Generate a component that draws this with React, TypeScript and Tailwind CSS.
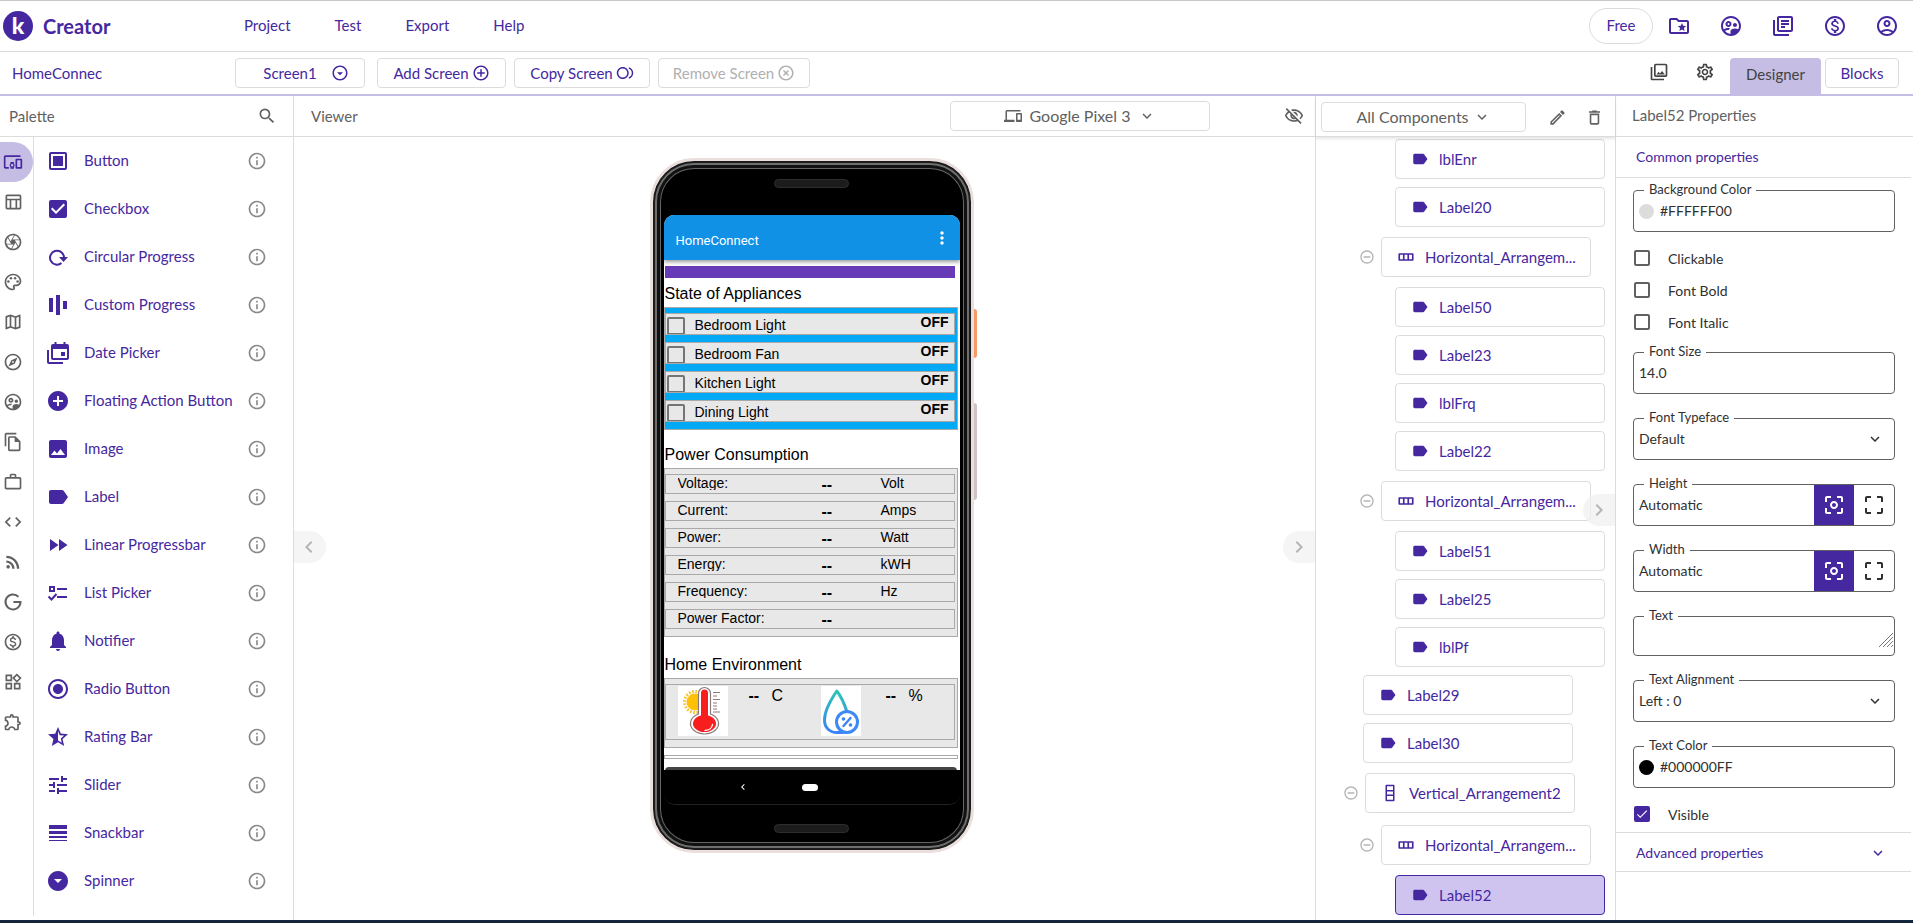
import { useState, type ReactNode } from 'react';
import type { IconType } from 'react-icons';
import {
  MdAddCircle,
  MdAddCircleOutline,
  MdArrowDropDownCircle,
  MdCenterFocusWeak,
  MdCheck,
  MdCheckBox,
  MdChevronLeft,
  MdChevronRight,
  MdCode,
  MdCropFree,
  MdDevices,
  MdFastForward,
  MdHighlightOff,
  MdImage,
  MdKeyboardArrowDown,
  MdLabel,
  MdMoreVert,
  MdNotifications,
  MdOutlineAccountCircle,
  MdOutlineArrowDropDownCircle,
  MdOutlineCamera,
  MdOutlineDelete,
  MdOutlineDevicesOther,
  MdOutlineEdit,
  MdOutlineExplore,
  MdOutlineExtension,
  MdOutlineFileCopy,
  MdOutlineFolderSpecial,
  MdOutlineInfo,
  MdOutlineLibraryBooks,
  MdOutlineMap,
  MdOutlineMonetizationOn,
  MdOutlinePalette,
  MdOutlinePhotoLibrary,
  MdOutlineSettings,
  MdOutlineSupervisedUserCircle,
  MdOutlineTableChart,
  MdOutlineVisibilityOff,
  MdOutlineWidgets,
  MdRadioButtonChecked,
  MdRemoveCircleOutline,
  MdRssFeed,
  MdSearch,
  MdStarHalf,
  MdToll,
  MdTune,
  MdWorkOutline,
} from 'react-icons/md';

type IconProps = { size?: number; className?: string };
type AnyIcon = IconType | ((p: IconProps) => ReactNode);

function Svg({ size = 24, className, children }: IconProps & { children: ReactNode }) {
  return (
    <svg width={size} height={size} viewBox="0 0 24 24" fill="currentColor" className={className}>
      {children}
    </svg>
  );
}

const ButtonIcon = (p: IconProps) => (
  <Svg {...p}>
    <rect x="4" y="4" width="16" height="16" rx="1" fill="none" stroke="currentColor" strokeWidth="2" />
    <rect x="7" y="7" width="10" height="10" />
  </Svg>
);

const CircularIcon = (p: IconProps) => (
  <Svg {...p}>
    <path d="M15.5 18.1A7 7 0 1 1 18 12" fill="none" stroke="currentColor" strokeWidth="2" />
    <path d="M13 12h9l-4.500 5z" />
  </Svg>
);

const BarsIcon = (p: IconProps) => (
  <Svg {...p}>
    <path d="M3 5h4v14H3zM10 2h4v20h-4zM17 8h4v8h-4z" />
  </Svg>
);

const DateIcon = (p: IconProps) => (
  <Svg {...p}>
    <path d="M7 3h1.500V1h2v2h7V1h2v2H21a2 2 0 0 1 2 2v12a2 2 0 0 1-2 2H7a2 2 0 0 1-2-2V5a2 2 0 0 1 2-2zm0 5v9h14V8zM15 11h4v4h-4z" />
    <path d="M1 9h2v12h14v2H3a2 2 0 0 1-2-2z" />
  </Svg>
);

const ListIcon = (p: IconProps) => (
  <Svg {...p}>
    <path d="M11 7h10v2H11zM11 15h10v2H11zM3 5h6v6H3zm2 2v2h2V7z" fillRule="evenodd" />
    <path d="M2.500 15.500l3 3 5-5.500" fill="none" stroke="currentColor" strokeWidth="2" />
  </Svg>
);

const SnackIcon = (p: IconProps) => (
  <Svg {...p}>
    <path d="M3 4h18v4H3zM3 10h18v3H3zM3 15h18v2H3zM3 19h18v1H3z" />
  </Svg>
);

const GoogleIcon = (p: IconProps) => (
  <Svg {...p}>
    <path d="M18.500 5.700A9 9 0 1 0 21 12h-8.500" fill="none" stroke="currentColor" strokeWidth="2.400" />
  </Svg>
);

const RowIcon = (p: IconProps) => (
  <Svg {...p}>
    <path d="M3 8h18v8H3zM9 8v8M15 8v8" fill="none" stroke="currentColor" strokeWidth="2.200" strokeLinejoin="round" />
  </Svg>
);

const ColumnIcon = (p: IconProps) => (
  <Svg {...p}>
    <path d="M7 2h10v20H7zM7 9h10M7 15h10" fill="none" stroke="currentColor" strokeWidth="2" strokeLinejoin="round" />
  </Svg>
);

const categories: { label: string; icon: AnyIcon }[] = [
  { label: 'User interface', icon: MdOutlineDevicesOther },
  { label: 'Layout', icon: MdOutlineTableChart },
  { label: 'Media', icon: MdOutlineCamera },
  { label: 'Drawing', icon: MdOutlinePalette },
  { label: 'Maps', icon: MdOutlineMap },
  { label: 'Sensors', icon: MdOutlineExplore },
  { label: 'Social', icon: MdOutlineSupervisedUserCircle },
  { label: 'Storage', icon: MdOutlineFileCopy },
  { label: 'Utilities', icon: MdWorkOutline },
  { label: 'Dynamic components', icon: MdCode },
  { label: 'Connectivity', icon: MdRssFeed },
  { label: 'Google', icon: GoogleIcon },
  { label: 'Monetization', icon: MdOutlineMonetizationOn },
  { label: 'Experimental', icon: MdOutlineWidgets },
  { label: 'Extension', icon: MdOutlineExtension },
];

const paletteItems: { label: string; icon: AnyIcon }[] = [
  { label: 'Button', icon: ButtonIcon },
  { label: 'Checkbox', icon: MdCheckBox },
  { label: 'Circular Progress', icon: CircularIcon },
  { label: 'Custom Progress', icon: BarsIcon },
  { label: 'Date Picker', icon: DateIcon },
  { label: 'Floating Action Button', icon: MdAddCircle },
  { label: 'Image', icon: MdImage },
  { label: 'Label', icon: MdLabel },
  { label: 'Linear Progressbar', icon: MdFastForward },
  { label: 'List Picker', icon: ListIcon },
  { label: 'Notifier', icon: MdNotifications },
  { label: 'Radio Button', icon: MdRadioButtonChecked },
  { label: 'Rating Bar', icon: MdStarHalf },
  { label: 'Slider', icon: MdTune },
  { label: 'Snackbar', icon: SnackIcon },
  { label: 'Spinner', icon: MdArrowDropDownCircle },
];

type Node = { name: string; kind: 'label' | 'row' | 'column'; indent: string };

const DEEP = 'pl-[79px]';
const SHALLOW = 'pl-[47px]';
const ROW = 'pl-[43px]';
const COLUMN = 'pl-[27px]';

const tree: Node[] = [
  { name: 'lblEnr', kind: 'label', indent: DEEP },
  { name: 'Label20', kind: 'label', indent: DEEP },
  { name: 'Horizontal_Arrangem...', kind: 'row', indent: ROW },
  { name: 'Label50', kind: 'label', indent: DEEP },
  { name: 'Label23', kind: 'label', indent: DEEP },
  { name: 'lblFrq', kind: 'label', indent: DEEP },
  { name: 'Label22', kind: 'label', indent: DEEP },
  { name: 'Horizontal_Arrangem...', kind: 'row', indent: ROW },
  { name: 'Label51', kind: 'label', indent: DEEP },
  { name: 'Label25', kind: 'label', indent: DEEP },
  { name: 'lblPf', kind: 'label', indent: DEEP },
  { name: 'Label29', kind: 'label', indent: SHALLOW },
  { name: 'Label30', kind: 'label', indent: SHALLOW },
  { name: 'Vertical_Arrangement2', kind: 'column', indent: COLUMN },
  { name: 'Horizontal_Arrangem...', kind: 'row', indent: ROW },
  { name: 'Label52', kind: 'label', indent: DEEP },
];

const appliances = ['Bedroom Light', 'Bedroom Fan', 'Kitchen Light', 'Dining Light'];

const readings = [
  ['Voltage:', 'Volt'],
  ['Current:', 'Amps'],
  ['Power:', 'Watt'],
  ['Energy:', 'kWH'],
  ['Frequency:', 'Hz'],
  ['Power Factor:', ''],
];

function Header() {
  const actions: [string, AnyIcon][] = [
    ['My projects', MdOutlineFolderSpecial],
    ['Community', MdOutlineSupervisedUserCircle],
    ['Docs', MdOutlineLibraryBooks],
    ['Pricing', MdOutlineMonetizationOn],
    ['Account', MdOutlineAccountCircle],
  ];
  return (
    <header className="flex h-[52px] shrink-0 items-center border-t border-b border-t-[#c8c8c8] border-b-[#dcdcdc] pr-[14px] pb-px pl-[3px]">
      <a href="#home" className="flex w-[241px] items-center gap-2.5">
        <svg width="30" height="30" viewBox="0 0 30 30">
          <circle cx="15" cy="15" r="15" fill="#4527a0" />
          <text x="15" y="23" textAnchor="middle" fill="#fff" fontFamily="Lato, sans-serif" fontWeight="900" fontSize="23">
            k
          </text>
        </svg>
        <span className="text-xl font-bold">Creator</span>
      </a>
      <nav className="flex gap-11 text-[15px]">
        <a href="#project">Project</a>
        <a href="#test">Test</a>
        <a href="#export">Export</a>
        <a href="#help">Help</a>
      </nav>
      <button className="mr-[14px] ml-auto h-9 w-[64px] rounded-full border border-[#dcdcdc] text-[15px]">Free</button>
      <div className="flex gap-[28px]">
        {actions.map(([label, Icon]) => (
          <button key={label} aria-label={label}>
            <Icon size={24} />
          </button>
        ))}
      </div>
    </header>
  );
}

const toolBtn = 'flex h-[30px] items-center justify-center rounded border border-[#dcdcdc]';

function Toolbar() {
  return (
    <div className="flex h-[44px] shrink-0 items-center border-b-2 border-[#c5bde3] pl-3 text-[15px]">
      <span className="w-[223px]">HomeConnec</span>
      <button className={`${toolBtn} w-[130px] gap-[14px] pl-3`}>
        Screen1 <MdOutlineArrowDropDownCircle size={18} />
      </button>
      <button className={`${toolBtn} ml-3 w-[129px] gap-[3px]`}>
        Add Screen <MdAddCircleOutline size={18} />
      </button>
      <button className={`${toolBtn} ml-2 w-[136px] gap-[3px]`}>
        Copy Screen <MdToll size={18} className="-scale-x-100" />
      </button>
      <button disabled className={`${toolBtn} ml-2 w-[152px] gap-[3px] text-[#b0b0b0]`}>
        Remove Screen <MdHighlightOff size={18} />
      </button>
      <div className="mr-[15px] ml-auto flex gap-[26px] pb-0.5 text-[#444]">
        <button aria-label="Assets">
          <MdOutlinePhotoLibrary size={20} />
        </button>
        <button aria-label="Settings">
          <MdOutlineSettings size={20} />
        </button>
      </div>
      <button className="h-9 w-[91px] self-end rounded-t bg-[#c5bde3] pb-1 text-[#424242]">Designer</button>
      <button className={`${toolBtn} mr-[14px] ml-1 w-[74px]`}>Blocks</button>
    </div>
  );
}

function Palette() {
  const [active, setActive] = useState('User interface');
  return (
    <aside className="flex w-[294px] shrink-0 flex-col border-r border-[#dcdcdc]">
      <div className="flex h-[41px] shrink-0 items-center justify-between border-b border-[#dcdcdc] pr-[16px] pl-[9px] text-[#616161]">
        <h2 className="text-[15px]">Palette</h2>
        <button aria-label="Search components">
          <MdSearch size={20} />
        </button>
      </div>
      <div className="flex min-h-0 flex-1">
        <div className="mb-1 flex w-[34px] shrink-0 flex-col border-r border-[#dcdcdc] pt-[5px]">
          {categories.map(({ label, icon: Icon }) => (
            <button
              key={label}
              aria-label={label}
              onClick={() => setActive(label)}
              className={
                active === label
                  ? 'flex h-10 items-center rounded-r-full bg-[#c5bde3] pl-[3px]'
                  : 'flex h-10 items-center pl-[3px] text-[#616161]'
              }
            >
              <Icon size={20} />
            </button>
          ))}
        </div>
        <ul className="min-w-0 flex-1 overflow-hidden">
          {paletteItems.map(({ label, icon: Icon }) => (
            <li key={label} className="flex h-12 items-center pr-[26px] pl-3">
              <Icon size={24} />
              <span className="ml-[14px] flex-1 pb-px text-[15px]">{label}</span>
              <button aria-label={`About ${label}`} className="text-[#8a8a8a]">
                <MdOutlineInfo size={20} />
              </button>
            </li>
          ))}
        </ul>
      </div>
    </aside>
  );
}

function Thermometer() {
  return (
    <svg width="50" height="50" viewBox="0 0 50 50" className="bg-white">
      <circle cx="17" cy="16" r="10.500" fill="none" stroke="#fbc02d" strokeWidth="3" strokeDasharray="1.700 1.600" />
      <circle cx="17" cy="16" r="8.500" fill="#ffc107" />
      <path d="M20.500 7.500a6 6 0 0 1 12 0V28a14 10.500 0 1 1-12 0z" fill="#fff" stroke="#8d7b7b" strokeWidth="1.200" />
      <path d="M23 7a3.500 3.500 0 0 1 7 0v22.500a11.500 8.500 0 1 1-7 0z" fill="#f91e1e" />
      <path d="M27 44.500c4 0 7-2.500 7.500-6" fill="none" stroke="#fff" strokeWidth="1.300" strokeLinecap="round" />
      <path d="M35 6.500h7M35 10h4M35 13.500h7M35 17h4M35 20h4M35 23h4M35 26h7" stroke="#8d7b7b" strokeWidth="1" />
    </svg>
  );
}

function Droplet() {
  return (
    <svg width="40" height="50" viewBox="0 0 40 50" className="bg-white">
      <defs>
        <linearGradient id="drop" x1="0" y1="0" x2="0" y2="1">
          <stop offset="0" stopColor="#2ec4b6" />
          <stop offset="1" stopColor="#3d82f6" />
        </linearGradient>
      </defs>
      <path
        d="M26 26C23.500 18 19 9 15.800 5 11 12 3.500 25 3.500 34c0 8 5.500 12.500 12.500 12.500 3 0 5 0 9-.5"
        fill="none"
        stroke="url(#drop)"
        strokeWidth="3"
        strokeLinejoin="round"
      />
      <circle cx="26" cy="36" r="10.500" fill="#fff" stroke="#3d8af5" strokeWidth="3" />
      <path d="M22.500 40l7-8" stroke="#3d82f6" strokeWidth="2.400" strokeLinecap="round" />
      <circle cx="22.500" cy="33" r="1.800" fill="#3d82f6" />
      <circle cx="29.500" cy="39" r="1.800" fill="#3d82f6" />
    </svg>
  );
}

function Phone() {
  return (
    <div className="flex">
      <div className="flex w-[324px] flex-col items-center rounded-[44px] border-[3px] border-[#eadfdd] bg-black bg-clip-padding pt-[18px] pb-[17px] shadow-[inset_0_0_0_2px_#1c1c1c,inset_0_0_0_4px_#6e6e6e,inset_0_0_0_7px_#111,inset_0_0_0_8px_#666]">
        <div className="h-[9px] w-[75px] rounded-full border border-[#2e2e2e] bg-[#1c1c1c]" />
        <div className="mt-[27px] h-[590px] w-[296px] overflow-hidden rounded-[10px] bg-black font-[Liberation_Sans,Arial,sans-serif] text-black">
          <div className="h-[555px] overflow-hidden bg-white">
            <div className="relative flex h-[45px] items-center justify-between bg-[#1091e6] pt-1.5 pr-2 pl-3 text-white shadow-[0_2px_4px_rgba(0,0,0,0.4)]">
              <span className="font-[Roboto,sans-serif] text-[13px]">HomeConnect</span>
              <button aria-label="Menu" className="pb-1.5">
                <MdMoreVert size={20} />
              </button>
            </div>
            <div className="mt-1.5 ml-px h-3 w-[290px] bg-[#673ab7]" />

            <h3 className="mt-[5px] mb-[3px] pl-px text-base leading-[21px]">State of Appliances</h3>
            <div className="flex w-[294px] flex-col gap-[7px] border border-[#a9a9a9] bg-[#03a9f4] pt-[5px] pb-[7px]">
              {appliances.map((name) => (
                <div key={name} className="flex h-[22px] w-[290px] overflow-hidden border border-[#a9a9a9] bg-[#e8e8e8] pr-[5px] pl-px">
                  <label className="flex flex-1 gap-2.5 text-sm leading-[22px]">
                    <input type="checkbox" className="mt-[3px] h-[18px] w-[18px] appearance-none rounded-xs border-2 border-[#757575] checked:bg-[#757575]" />
                    {name}
                  </label>
                  <span className="text-sm leading-4 font-bold">OFF</span>
                </div>
              ))}
            </div>

            <h3 className="mt-[14px] mb-[3px] pl-px text-base leading-[21px]">Power Consumption</h3>
            <div className="flex w-[294px] flex-col gap-[7px] border border-[#a9a9a9] bg-[#e8e8e8] pt-[5px] pb-[7px]">
              {readings.map(([name, unit]) => (
                <div key={name} className="grid h-5 w-[290px] grid-cols-[144px_59px_1fr] border border-[#a9a9a9] pl-3 text-sm leading-4">
                  <span className="h-[15px] overflow-hidden">{name}</span>
                  <span className="text-base leading-5 font-bold">--</span>
                  <span>{unit}</span>
                </div>
              ))}
            </div>

            <h3 className="mt-[17px] mb-[3px] pl-px text-base leading-[21px]">Home Environment</h3>
            <div className="w-[294px] border border-[#a9a9a9] bg-[#e8e8e8] pt-[5px] pb-[7px]">
              <div className="flex h-14 w-[290px] border border-[#a9a9a9] pt-px pl-3 text-base leading-5">
                <Thermometer />
                <span className="ml-[21px] w-[23px] font-bold">--</span>
                <span className="w-[49px]">C</span>
                <Droplet />
                <span className="ml-[25px] w-[23px] font-bold">--</span>
                <span>%</span>
              </div>
            </div>
            <div className="mt-[7px] h-1 w-[294px] border border-[#a9a9a9]" />
            <div className="mt-2 ml-px h-1 w-[292px] rounded-t bg-[#444]" />
          </div>
          <div className="flex h-[35px] items-center rounded-b-[10px] border-b border-[#222] pl-[73px] text-white">
            <MdChevronLeft size={12} />
            <span className="ml-[53px] h-[7px] w-4 rounded-full bg-white" />
          </div>
        </div>
        <div className="mt-[19px] h-[9px] w-[75px] rounded-full border border-[#2e2e2e] bg-[#1c1c1c]" />
      </div>
      <div className="flex w-1 flex-col pt-[151px]">
        <span className="h-[49px] w-[3px] rounded-r-sm bg-[#f39a6b]" />
        <span className="mt-[45px] h-[97px] w-[3px] rounded-r-sm bg-[#cfc3c3]" />
      </div>
    </div>
  );
}

function Viewer() {
  return (
    <main className="relative flex min-w-0 flex-1 flex-col border-r border-[#dcdcdc]">
      <div className="flex h-[41px] shrink-0 items-center border-b border-[#dcdcdc] pr-[11px] pl-[17px] text-[#616161]">
        <h2 className="text-[15px]">Viewer</h2>
        <div className="mr-[74px] ml-auto flex h-[30px] w-[260px] items-center justify-center gap-2 rounded border border-[#dcdcdc]">
          <MdDevices size={18} />
          <select aria-label="Device" className="field-sizing-content appearance-none text-base leading-5">
            <option>Google Pixel 3</option>
          </select>
          <MdKeyboardArrowDown size={18} />
        </div>
        <button aria-label="Show hidden components">
          <MdOutlineVisibilityOff size={20} />
        </button>
      </div>
      <div className="flex flex-1 items-start justify-center overflow-hidden pt-[21px] pl-[18px]">
        <Phone />
      </div>
      <button aria-label="Collapse palette" className="absolute top-[435px] left-0 flex h-8 w-8 items-center rounded-r-full bg-[#f5f5f5] pl-[3px] text-[#b5b5b5]">
        <MdChevronLeft size={24} />
      </button>
      <button aria-label="Collapse components" className="absolute top-[435px] right-0 flex h-8 w-8 items-center justify-center rounded-l-full bg-[#f5f5f5] text-[#b5b5b5]">
        <MdChevronRight size={24} />
      </button>
    </main>
  );
}

function Components() {
  const last = tree.length - 1;
  return (
    <section className="relative flex w-[300px] shrink-0 flex-col border-r border-[#dcdcdc]">
      <div className="z-10 flex h-[41px] shrink-0 items-center border-b border-[#dcdcdc] bg-white pt-0.5 pr-[11px] pl-[5px] text-[#616161] shadow-[0_2px_3px_rgba(0,0,0,0.1)]">
        <div className="mr-auto flex h-[30px] w-[205px] items-center justify-center gap-1 rounded border border-[#dcdcdc]">
          <select aria-label="Component filter" className="field-sizing-content appearance-none text-base leading-5">
            <option>All Components</option>
          </select>
          <MdKeyboardArrowDown size={18} />
        </div>
        <button aria-label="Rename" className="mr-[18px]">
          <MdOutlineEdit size={19} />
        </button>
        <button aria-label="Delete">
          <MdOutlineDelete size={19} />
        </button>
      </div>
      <ul className="-mt-0.5 min-h-0 flex-1 overflow-hidden text-[15px]">
        {tree.map((n, i) => {
          const Icon = n.kind === 'label' ? MdLabel : n.kind === 'row' ? RowIcon : ColumnIcon;
          return (
            <li key={i} className={`flex items-center gap-1.5 ${n.indent} ${n.kind === 'label' ? 'py-1' : 'py-1.5'}`}>
              {n.kind !== 'label' && (
                <button aria-label={`Collapse ${n.name}`} className="text-[#b5b5b5]">
                  <MdRemoveCircleOutline size={16} />
                </button>
              )}
              <button
                className={`flex h-10 w-[210px] items-center gap-2.5 rounded border pl-[15px] ${
                  i === last ? 'border-[#4527a0] bg-[#cfc4f0]' : 'border-[#dcdcdc]'
                }`}
              >
                <Icon size={18} />
                {n.name}
              </button>
            </li>
          );
        })}
      </ul>
      <button aria-label="Collapse properties" className="absolute top-[398px] right-0 flex h-8 w-8 items-center justify-center rounded-l-full bg-[#f0f0f0]/70 text-[#b5b5b5]">
        <MdChevronRight size={24} />
      </button>
    </section>
  );
}

function Field({ id, label, short, children }: { id: string; label: string; short?: boolean; children: ReactNode }) {
  return (
    <div className={`relative mr-[18px] mb-6 ml-[17px] flex items-center rounded border border-[#616161] ${short ? 'h-10' : 'h-[42px]'}`}>
      <label htmlFor={id} className="absolute -top-2.5 left-2.5 bg-white px-[5px] text-[13px] leading-4">
        {label}
      </label>
      {children}
    </div>
  );
}

function ColorField({ id, label, value, swatch }: { id: string; label: string; value: string; swatch: string }) {
  return (
    <Field id={id} label={label}>
      <span className={`ml-[5px] h-[15px] w-[15px] shrink-0 rounded-full ${swatch}`} />
      <input id={id} defaultValue={value} className="min-w-0 flex-1 px-1.5 outline-none" />
    </Field>
  );
}

function SelectField({ id, label, value }: { id: string; label: string; value: string }) {
  return (
    <Field id={id} label={label}>
      <select id={id} className="h-full w-full appearance-none px-[5px]">
        <option>{value}</option>
      </select>
      <MdKeyboardArrowDown size={18} className="pointer-events-none absolute right-2.5" />
    </Field>
  );
}

function SizeField({ id, label }: { id: string; label: string }) {
  return (
    <Field id={id} label={label}>
      <input id={id} defaultValue="Automatic" className="min-w-0 flex-1 px-[5px] outline-none" />
      <button aria-label={`${label} automatic`} className="flex h-full w-10 items-center justify-center bg-[#4527a0] text-white">
        <MdCenterFocusWeak size={24} />
      </button>
      <button aria-label={`${label} fill parent`} className="flex h-full w-10 items-center justify-center">
        <MdCropFree size={24} />
      </button>
    </Field>
  );
}

function Check({ label, checked }: { label: string; checked?: boolean }) {
  return (
    <label className="relative flex h-8 items-center gap-[18px] pl-[18px]">
      <input
        type="checkbox"
        defaultChecked={checked}
        className="peer h-4 w-4 appearance-none rounded-xs border-2 border-[#616161] checked:border-[#4527a0] checked:bg-[#4527a0]"
      />
      <MdCheck size={14} className="pointer-events-none absolute left-[19px] hidden text-white peer-checked:block" />
      <span className="pt-px">{label}</span>
    </label>
  );
}

function Properties() {
  return (
    <aside className="flex w-[297px] shrink-0 flex-col text-sm text-[#303030]">
      <h2 className="flex h-[41px] shrink-0 items-center border-b border-[#dcdcdc] pl-4 text-[15px] text-[#616161]">
        Label52 Properties
      </h2>
      <h3 className="mr-0.5 mb-3 flex h-[41px] shrink-0 items-center border-b border-[#dcdcdc] pl-5 text-[#4527a0]">
        Common properties
      </h3>
      <ColorField id="bg" label="Background Color" value="#FFFFFF00" swatch="bg-[#dcdcdc]" />
      <div className="-mt-[14px] mb-[14px]">
        <Check label="Clickable" />
        <Check label="Font Bold" />
        <Check label="Font Italic" />
      </div>
      <Field id="size" label="Font Size">
        <input id="size" defaultValue="14.0" className="min-w-0 flex-1 px-[5px] outline-none" />
      </Field>
      <SelectField id="typeface" label="Font Typeface" value="Default" />
      <SizeField id="height" label="Height" />
      <SizeField id="width" label="Width" />
      <Field id="text" label="Text" short>
        <textarea id="text" className="h-full w-full resize-none px-[5px] outline-none" />
        <svg width="14" height="14" viewBox="0 0 14 14" className="pointer-events-none absolute right-px bottom-2">
          <path d="M0 14L14 0M4 14L14 4M8 14l6-6M12 14l2-2" stroke="#777" strokeWidth="1" />
        </svg>
      </Field>
      <SelectField id="align" label="Text Alignment" value="Left : 0" />
      <ColorField id="color" label="Text Color" value="#000000FF" swatch="bg-black" />
      <div className="-mt-[14px]">
        <Check label="Visible" checked />
      </div>
      <button className="mt-0.5 mr-0.5 flex h-10 shrink-0 items-center justify-between border-y border-[#dcdcdc] pt-px pr-6 pl-5 text-[#4527a0]">
        Advanced properties
        <MdKeyboardArrowDown size={18} />
      </button>
    </aside>
  );
}

export default function App() {
  return (
    <div className="flex h-screen flex-col bg-white font-[Lato,'Open_Sans',sans-serif] text-[#4527a0]">
      <Header />
      <Toolbar />
      <div className="flex min-h-0 flex-1">
        <Palette />
        <Viewer />
        <Components />
        <Properties />
      </div>
      <div className="h-[3px] shrink-0 bg-[#14253d]" />
    </div>
  );
}
